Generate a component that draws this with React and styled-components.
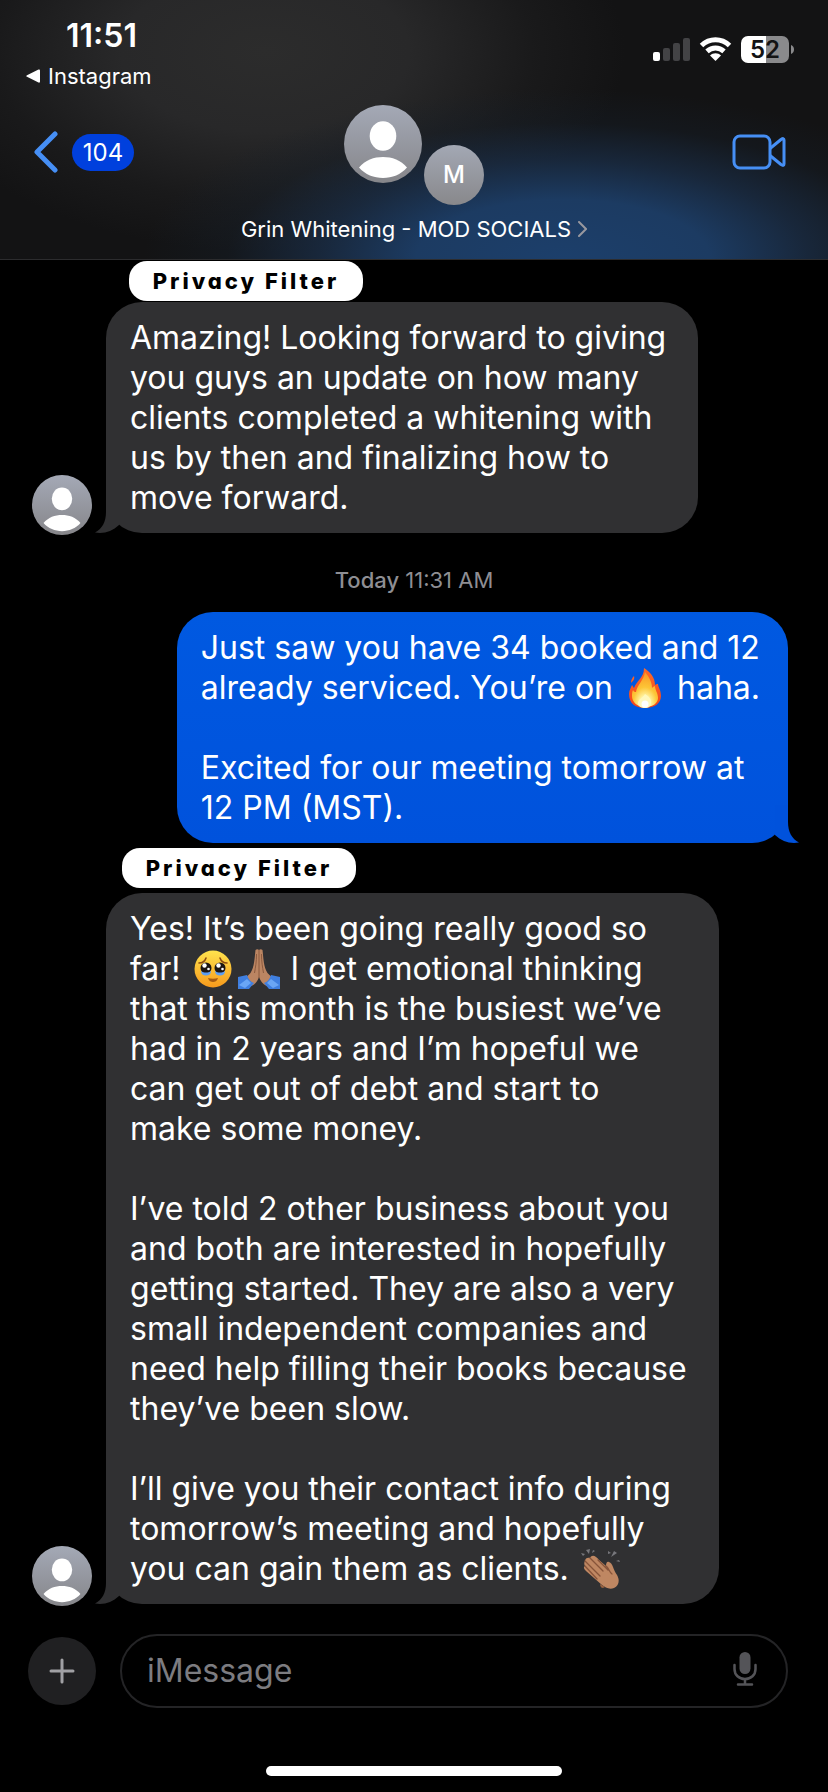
import React from "react";
import styled, { createGlobalStyle } from "styled-components";

const GlobalStyle = createGlobalStyle`
  * {
    box-sizing: border-box;
  }
  body {
    margin: 0;
    background: #000;
    color: #fff;
    font-family: Inter, "Liberation Sans", sans-serif;
  }
  button {
    background: none;
    border: none;
    padding: 0;
    color: inherit;
    font: inherit;
    cursor: pointer;
  }
`;

const Screen = styled.div`
  display: flex;
  flex-direction: column;
  min-height: 100vh;
`;

const Header = styled.header`
  border-bottom: 1px solid #2c2c2e;
  background:
    radial-gradient(ellipse 420px 170px at 68% 100%, #1c3f6b 0%, #1c3b62 35%, rgba(26, 46, 72, 0.75) 58%, rgba(22, 32, 44, 0.35) 80%, rgba(19, 19, 20, 0) 100%),
    radial-gradient(ellipse 360px 200px at 32% 20%, #2c2c2c 0%, #282829 40%, rgba(30, 30, 31, 0.6) 75%, rgba(19, 19, 20, 0) 100%),
    #131314;
`;

const StatusBar = styled.div`
  display: flex;
  justify-content: space-between;
  padding: 15px 34px 0 26px;
`;

const Clock = styled.time`
  display: block;
  padding-left: 40px;
  font-size: 32px;
  line-height: 42px;
  font-weight: 600;
`;

const BackToApp = styled.a`
  display: flex;
  align-items: center;
  gap: 8px;
  margin-top: 2px;
  color: #fff;
  font-size: 22px;
  line-height: 34px;
  text-decoration: none;
`;

const StatusIcons = styled.div`
  display: flex;
  align-items: flex-end;
  gap: 9px;
  height: 48px;
`;

const Battery = styled.div`
  display: flex;
  align-items: center;
  gap: 2px;
`;

const BatteryLevel = styled.div`
  width: 48px;
  height: 27px;
  border-radius: 7px;
  background: linear-gradient(90deg, #fff 52%, #8a8a8c 52%);
  color: #131314;
  font-size: 24px;
  line-height: 27px;
  font-weight: 600;
  text-align: center;
`;

const Nav = styled.nav`
  display: grid;
  grid-template-columns: 1fr auto 1fr;
  padding: 12px 34px 0;
`;

const BackButton = styled.button`
  display: flex;
  align-items: center;
  gap: 14px;
  height: 94px;
  justify-self: start;
`;

const UnreadBadge = styled.span`
  min-width: 62px;
  border-radius: 19px;
  background: #0040dd;
  font-size: 24px;
  line-height: 37px;
  text-align: center;
`;

const VideoButton = styled.button`
  display: flex;
  align-items: center;
  height: 94px;
  margin-right: 8px;
  justify-self: end;
`;

const AvatarPair = styled.div`
  display: flex;
  justify-content: center;
  gap: 2px;
  height: 100px;
`;

const Initial = styled.div`
  align-self: flex-end;
  width: 60px;
  height: 60px;
  border-radius: 50%;
  background: linear-gradient(#a3a8b4, #88888b);
  font-size: 24px;
  line-height: 60px;
  font-weight: 500;
  text-align: center;
`;

const GroupName = styled.button`
  display: flex;
  justify-content: center;
  align-items: center;
  gap: 7px;
  grid-column: 1 / -1;
  margin: 8px 0 14px;
  font-size: 22px;
  line-height: 32px;
`;

const Thread = styled.main`
  display: flex;
  flex-direction: column;
  flex: 1;
`;

const FilterLabel = styled.span`
  align-self: flex-start;
  min-width: 234px;
  margin: ${props => props.$gap}px 0 ${props => props.$gap}px ${props => props.$indent}px;
  border-radius: 18px;
  background: #fff;
  color: #000;
  font-size: 22px;
  line-height: 40px;
  font-weight: 800;
  font-feature-settings: "cv11";
  letter-spacing: 3px;
  text-align: center;
`;

const MessageRow = styled.div`
  display: flex;
  align-items: flex-end;
  justify-content: ${props => (props.$mine ? "flex-end" : "flex-start")};
  gap: 14px;
  padding: 0 40px 0 32px;

  > svg {
    margin-bottom: -2px;
  }
`;

const Bubble = styled.div`
  position: relative;
  padding: 16px ${props => (props.$mine ? 28 : 32)}px 15px 24px;
  border-radius: 36px;
  background: ${props => (props.$mine ? "linear-gradient(#0059e1, #0052dc)" : "#303032")};
  font-size: 32px;
  line-height: 40px;

  p {
    margin: 0;
    white-space: pre-line;
  }
  p + p {
    margin-top: 40px;
  }
`;

const TailShape = styled.svg`
  position: absolute;
  bottom: 0;
  ${props => (props.$mine ? "right: -11px; transform: scaleX(-1);" : "left: -11px;")}
  fill: ${props => (props.$mine ? "#0052dc" : "#303032")};
`;

const Timestamp = styled.div`
  margin: 34px 0 19px;
  color: #8e8e93;
  font-size: 22px;
  line-height: 26px;
  text-align: center;

  b {
    font-weight: 500;
  }
`;

const EmojiSvg = styled.svg`
  width: 42px;
  height: 40px;
  margin: 0 2px;
  vertical-align: -9px;
`;

const Composer = styled.form`
  display: flex;
  align-items: center;
  gap: 24px;
  padding: 30px 40px 0 28px;
`;

const PlusButton = styled.button`
  display: grid;
  place-items: center;
  width: 68px;
  height: 68px;
  border-radius: 50%;
  background: #202022;
`;

const Field = styled.div`
  display: flex;
  align-items: center;
  flex: 1;
  height: 74px;
  padding: 0 29px 0 25px;
  border: 2px solid #242426;
  border-radius: 37px;

  input {
    flex: 1;
    min-width: 0;
    padding: 0;
    border: none;
    outline: none;
    background: none;
    color: #fff;
    font: 32px/40px Inter, "Liberation Sans", sans-serif;
  }
  input::placeholder {
    color: #7c7c80;
    opacity: 1;
  }
`;

const HomeIndicator = styled.div`
  width: 296px;
  height: 10px;
  margin: 58px auto 16px;
  border-radius: 5px;
  background: #fff;
`;

function Person({ size, id }) {
  return (
    <svg width={size} height={size} viewBox="0 0 78 78" aria-hidden="true">
      <defs>
        <linearGradient id={id} x1="0" y1="0" x2="0" y2="1">
          <stop offset="0" stopColor="#a4a9b6" />
          <stop offset="1" stopColor="#86868a" />
        </linearGradient>
      </defs>
      <circle cx="39" cy="39" r="39" fill={`url(#${id})`} />
      <ellipse cx="39" cy="31" rx="13.3" ry="14.8" fill="#fff" />
      <path d="M15 62.500C21 55 30 52 39 52s18 3 24 10.500C57 69.500 48 73 39 73s-18-3.500-24-10.500z" fill="#fff" />
    </svg>
  );
}

function Tail({ $mine }) {
  return (
    <TailShape $mine={$mine} width="26" height="38" viewBox="0 -12 26 38" aria-hidden="true">
      <path d="M11 -12V5C11 15 7 22 0 25.500C9 27 17 24.500 24 18V-12Z" />
    </TailShape>
  );
}

function Fire() {
  return (
    <EmojiSvg viewBox="0 0 42 40" role="img" aria-label="fire">
      <defs>
        <linearGradient id="flame" x1="0" y1="0" x2="0" y2="1">
          <stop offset="0" stopColor="#fb6a2a" />
          <stop offset="1" stopColor="#f4451b" />
        </linearGradient>
        <radialGradient id="core" cx="0.5" cy="0.9" r="0.85">
          <stop offset="0" stopColor="#fff" />
          <stop offset="0.25" stopColor="#fff3a0" />
          <stop offset="0.55" stopColor="#fdc536" />
          <stop offset="1" stopColor="#fb9a25" />
        </radialGradient>
      </defs>
      <path d="M20 0C26 4 31 9 31 17c1-1 2-1 3-1 0 3 3 6 3 12 0 7-6 12-16 12S5 35 5 26c0-4 2-6 3-9 1 1 1 2 2 3 3-8 10-10 10-20zM10 8c1 3-1 5-3 7 0-3 1-5 3-7z" fill="url(#flame)" />
      <path d="M21 4c5 6 7 11 7 16 1-1 2-2 3-2 0 4 3 7 3 12 0 5-5 9-13 9S8 34 8 28c0-2 0-4 1-6 1 2 2 2 3 2 1-7 8-12 9-20z" fill="url(#core)" />
      <path d="M21 26c3 2 6 4 6 8s-2 6-6 6-7-2-7-5c0-4 5-5 7-9z" fill="#fff8bd" />
      <circle cx="21" cy="36" r="3.500" fill="#fff" />
    </EmojiSvg>
  );
}

function TearyFace() {
  return (
    <EmojiSvg viewBox="0 0 42 40" role="img" aria-label="face holding back tears">
      <defs>
        <linearGradient id="face" x1="0" y1="0" x2="0" y2="1">
          <stop offset="0" stopColor="#ffe34d" />
          <stop offset="1" stopColor="#f79a1c" />
        </linearGradient>
      </defs>
      <circle cx="21" cy="20" r="18.500" fill="url(#face)" />
      <path d="M7 14c3 0 6-2 7-5M28 9c1 3 4 5 7 5" stroke="#8a4b12" strokeWidth="1.600" fill="none" strokeLinecap="round" />
      <circle cx="14" cy="19" r="5.500" fill="#1c1512" />
      <circle cx="28" cy="19" r="5.500" fill="#1c1512" />
      <path d="M9 22c3 2 7 2 10 0 0 3-2 4.500-5 4.500S9 25 9 22zM23 22c3 2 7 2 10 0 0 3-2 4.500-5 4.500S23 25 23 22z" fill="#5c9df2" />
      <circle cx="12.500" cy="16.500" r="2.200" fill="#fff" />
      <circle cx="26.500" cy="16.500" r="2.200" fill="#fff" />
      <circle cx="16.500" cy="20" r="1.300" fill="#fff" />
      <circle cx="30.500" cy="20" r="1.300" fill="#fff" />
      <path d="M16 29c3 1 7 1 10 0-1 3-3 4-5 4s-4-1-5-4z" fill="#a45a12" />
    </EmojiSvg>
  );
}

function Hands() {
  return (
    <EmojiSvg viewBox="0 0 42 40" role="img" aria-label="folded hands">
      <path d="M17.500 1c1-1 2.500-1 3.500 0 1-1 2.500-1 3.500 0 1 8 1 17 5 23l5 5-6 8c-4-2-6-5-7.500-9-1.500 4-3.500 7-7.500 9l-6-8 5-5c4-6 4-15 5-23z" fill="#bb8562" />
      <path d="M21 1v28M18.500 5c0 8-1 13-2 19M23.500 5c0 8 1 13 2 19" stroke="#8b5a3f" strokeWidth="1" fill="none" />
      <path d="M0 28l9-2c1 4 4 7 7 8l-5 6H0zM42 28l-9-2c-1 4-4 7-7 8l5 6h11z" fill="#3f7fe0" />
      <path d="M1 36l8-6 4 4-6 5zM41 36l-8-6-4 4 6 5z" fill="#6aa6f5" />
    </EmojiSvg>
  );
}

function Clap() {
  return (
    <EmojiSvg viewBox="0 0 42 40" role="img" aria-label="clapping hands">
      <path d="M3 7l-2-3 4 1zM9 5L6 1l4-1zM12 4l1-3 2 1zM28 5l0-3 3 2zM31 8l3-6 3 2zM36 12l3-1 1 2z" fill="#77777c" />
      <path d="M5 12c0-3 3-4 5-3 2-4 6-2 9 2l7 6c0-3 1-5 3-4 4 1 4 8 8 13 3 5 2 11-3 13-5 2-9-1-12-3L6 22c-2-2-3-4-1-5-1-2-1-4 0-5z" fill="#bf8762" />
      <path d="M10 9l13 13M5 12l15 15M5 17l12 13M18 11l10 10M26 17c3 2 3 6 6 8" stroke="#87543a" strokeWidth="1.300" fill="none" strokeLinecap="round" />
      <path d="M20 35l5 3-2 1c-2 0-3-2-3-4z" fill="#96603f" />
    </EmojiSvg>
  );
}

function App() {
  return (
    <Screen>
      <GlobalStyle />
      <Header>
        <StatusBar>
          <div>
            <Clock>11:51</Clock>
            <BackToApp href="#instagram">
              <svg width="14" height="14" viewBox="0 0 14 14" aria-hidden="true">
                <path d="M1 6.200L12.500 .5Q14 0 14 1.500v11q0 1.500-1.500 1L1 7.800Q-.5 7 1 6.200z" fill="#fff" />
              </svg>
              Instagram
            </BackToApp>
          </div>
          <StatusIcons>
            <svg width="37" height="25" viewBox="0 0 37 25" aria-label="Signal">
              <rect x="0" y="14" width="7" height="9" rx="2" fill="#fff" />
              <rect x="10" y="10" width="7" height="13" rx="2" fill="#434345" />
              <rect x="20" y="5" width="7" height="18" rx="2" fill="#434345" />
              <rect x="30" y="0" width="7" height="23" rx="2" fill="#434345" />
            </svg>
            <svg width="33" height="26" viewBox="0 0 33 26" aria-label="Wi-Fi">
              <path d="M2.500 8.500C10.500.8 22.500.8 30.500 8.500" stroke="#fff" strokeWidth="5" fill="none" />
              <path d="M8 14.300c5-4.500 12-4.500 17 0" stroke="#fff" strokeWidth="5" fill="none" />
              <path d="M11 18.500c3-3 8-3 11 0L16.500 24z" fill="#fff" />
            </svg>
            <Battery>
              <BatteryLevel>52</BatteryLevel>
              <svg width="3" height="9" viewBox="0 0 3 9" aria-hidden="true">
                <path d="M0 0c4 1 4 8 0 9z" fill="#8a8a8c" />
              </svg>
            </Battery>
          </StatusIcons>
        </StatusBar>
        <Nav>
          <BackButton type="button" aria-label="Back, 104 unread">
            <svg width="24" height="42" viewBox="0 0 24 42" fill="none" stroke="#468ff5" strokeWidth="5" strokeLinecap="round" strokeLinejoin="round">
              <path d="M21 3L3 21l18 18" />
            </svg>
            <UnreadBadge>104</UnreadBadge>
          </BackButton>
          <AvatarPair>
            <Person size={78} id="group" />
            <Initial>M</Initial>
          </AvatarPair>
          <VideoButton type="button" aria-label="Video call">
            <svg width="54" height="36" viewBox="0 0 54 36" fill="none" stroke="#468ff5" strokeWidth="3" strokeLinejoin="round">
              <rect x="2" y="2" width="36" height="32" rx="6" />
              <path d="M38 14.500L49 5.500Q52 3.500 52 6v24q0 2.500-3 .5L38 21.500" />
            </svg>
          </VideoButton>
          <GroupName type="button">
            Grin Whitening - MOD SOCIALS
            <svg width="9" height="16" viewBox="0 0 9 16" fill="none" stroke="#98989f" strokeWidth="2" strokeLinecap="round" aria-hidden="true">
              <path d="M1 1l7 7-7 7" />
            </svg>
          </GroupName>
        </Nav>
      </Header>

      <Thread>
        <FilterLabel $indent={129} $gap={1}>Privacy Filter</FilterLabel>
        <MessageRow>
          <Person size={60} id="first" />
          <Bubble>
            <p>
              {"Amazing! Looking forward to giving\nyou guys an update on how many\nclients completed a whitening with\nus by then and finalizing how to\nmove forward."}
            </p>
            <Tail />
          </Bubble>
        </MessageRow>

        <Timestamp>
          <b>Today</b> 11:31 AM
        </Timestamp>

        <MessageRow $mine>
          <Bubble $mine>
            <p>
              {"Just saw you have 34 booked and 12\nalready serviced. You’re on "}
              <Fire />
              {" haha."}
            </p>
            <p>{"Excited for our meeting tomorrow at\n12 PM (MST)."}</p>
            <Tail $mine />
          </Bubble>
        </MessageRow>

        <FilterLabel $indent={122} $gap={5}>Privacy Filter</FilterLabel>
        <MessageRow>
          <Person size={60} id="second" />
          <Bubble>
            <p>
              {"Yes! It’s been going really good so\nfar! "}
              <TearyFace />
              <Hands />
              {" I get emotional thinking\nthat this month is the busiest we’ve\nhad in 2 years and I’m hopeful we\ncan get out of debt and start to\nmake some money."}
            </p>
            <p>
              {"I’ve told 2 other business about you\nand both are interested in hopefully\ngetting started. They are also a very\nsmall independent companies and\nneed help filling their books because\nthey’ve been slow."}
            </p>
            <p>
              {"I’ll give you their contact info during\ntomorrow’s meeting and hopefully\nyou can gain them as clients. "}
              <Clap />
            </p>
            <Tail />
          </Bubble>
        </MessageRow>
      </Thread>

      <Composer onSubmit={e => e.preventDefault()}>
        <PlusButton type="button" aria-label="Add attachment">
          <svg width="26" height="26" viewBox="0 0 26 26" stroke="#a0a0a4" strokeWidth="3" strokeLinecap="round">
            <path d="M13 2v22M2 13h22" />
          </svg>
        </PlusButton>
        <Field>
          <input type="text" placeholder="iMessage" aria-label="iMessage" />
          <button type="button" aria-label="Dictate">
            <svg width="24" height="34" viewBox="0 0 24 34" fill="none" stroke="#545458" strokeWidth="2.500" strokeLinecap="round">
              <rect x="6.500" y="0" width="11" height="22" rx="5.500" fill="#545458" stroke="none" />
              <path d="M1.500 13v4c0 6 4.500 10 10.500 10s10.500-4 10.500-10v-4M12 27v5M5 32.500h14" />
            </svg>
          </button>
        </Field>
      </Composer>
      <HomeIndicator />
    </Screen>
  );
}

export default App;
